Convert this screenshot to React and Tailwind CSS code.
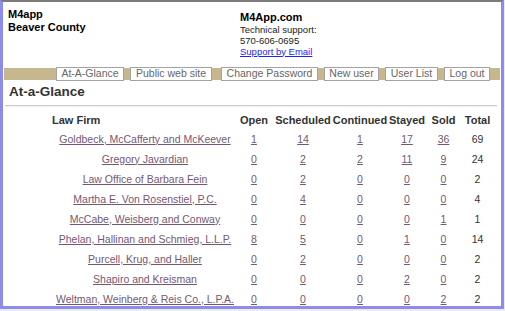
import React from "react";

const rows = [
  ["Goldbeck, McCafferty and McKeever", 1, 14, 1, 17, 36, 69],
  ["Gregory Javardian", 0, 2, 2, 11, 9, 24],
  ["Law Office of Barbara Fein", 0, 2, 0, 0, 0, 2],
  ["Martha E. Von Rosenstiel, P.C.", 0, 4, 0, 0, 0, 4],
  ["McCabe, Weisberg and Conway", 0, 0, 0, 0, 1, 1],
  ["Phelan, Hallinan and Schmieg, L.L.P.", 8, 5, 0, 1, 0, 14],
  ["Purcell, Krug, and Haller", 0, 2, 0, 0, 0, 2],
  ["Shapiro and Kreisman", 0, 0, 0, 2, 0, 2],
  ["Weltman, Weinberg & Reis Co., L.P.A.", 0, 0, 0, 0, 2, 2],
];

// fixed column widths, cells center their content (overflow spills evenly)
const cols = ["w-[190px]", "w-[28px]", "w-[70px]", "w-[44px]", "w-[50px]", "w-[23px]", "w-[45px]"];

const navItems = [
  ["At-A-Glance", "w-[68px]", ""],
  ["Public web site", "w-[82px]", ""],
  ["Change Password", "w-[97px]", "ml-[3px]"],
  ["New user", "w-[55px]", ""],
  ["User List", "w-[53px]", ""],
  ["Log out", "w-[46px]", ""],
];

function Cell({ w, children, className = "" }) {
  return (
    <div className={`${w} flex justify-center shrink-0`}>
      <span className={`whitespace-nowrap ${className}`}>{children}</span>
    </div>
  );
}

export default function App() {
  return (
    <div className="w-[505px] h-[311px] bg-[#ececec] overflow-hidden" style={{ fontFamily: '"Liberation Sans", Arial, sans-serif' }}>
      <div className="w-[504px] h-[309px] bg-white border-t-2 border-t-[#7b7b7b] border-l-[3px] border-r-[3px] border-b-[3px] border-l-[#8c8cee] border-r-[#8c8cee] border-b-[#8c8cee] overflow-hidden">
        {/* header */}
        <div className="flex pt-[6px]">
          <div className="w-[237px] pl-[5px] text-[11px] leading-[13px] font-bold text-black">
            <div>M4app</div>
            <div>Beaver County</div>
          </div>
          <div className="mt-[3px] text-[#222]">
            <div className="text-[11px] leading-[12.5px] font-bold text-black">M4App.com</div>
            <div className="text-[9.5px] leading-[11px]">Technical support:</div>
            <div className="text-[9.5px] leading-[11px]">570-606-0695</div>
            <a href="#" className="block text-[9.5px] leading-[11px] text-[#1f1fff] underline">Support by Email</a>
          </div>
        </div>

        {/* nav band */}
        <div className="mt-[11px] ml-[1px] w-[496px] h-[12px] bg-[#c6b78f] flex items-center justify-end gap-[6px] pr-[10px]">
          {navItems.map(([label, w, extra]) => (
            <div
              key={label}
              className={`${w} ${extra} h-[14px] shrink-0 bg-white border border-[#a3a3a3] flex items-center justify-center text-[10.5px] text-[#666] leading-none`}
            >
              {label}
            </div>
          ))}
        </div>

        <div className="mt-[4px] pl-[6px] text-[13.5px] leading-[16px] font-bold text-[#333]">At-a-Glance</div>
        <div className="mt-[5px] ml-[2px] w-[492px] h-[2px] border-t border-t-[#cdcdcd] bg-[#f0f0f0]" />

        {/* table */}
        <div className="mt-[5px] pl-[47px] text-[10.5px]">
          <div className="flex h-[18px] items-center font-bold text-[#333] text-[11px]">
            <div className="w-[190px] shrink-0 pl-[2px]">Law Firm</div>
            {["Open", "Scheduled", "Continued", "Stayed", "Sold", "Total"].map((h, i) => (
              <Cell key={h} w={cols[i + 1]}>{h}</Cell>
            ))}
          </div>
          {rows.map((r) => (
            <div key={r[0]} className="flex h-[20px] items-center">
              {r.map((v, i) =>
                i === 6 ? (
                  <Cell key={i} w={cols[i]} className="text-[#333]">{v}</Cell>
                ) : (
                  <Cell key={i} w={cols[i]} className="text-[#735873] underline">{v}</Cell>
                )
              )}
            </div>
          ))}
        </div>
      </div>
    </div>
  );
}
